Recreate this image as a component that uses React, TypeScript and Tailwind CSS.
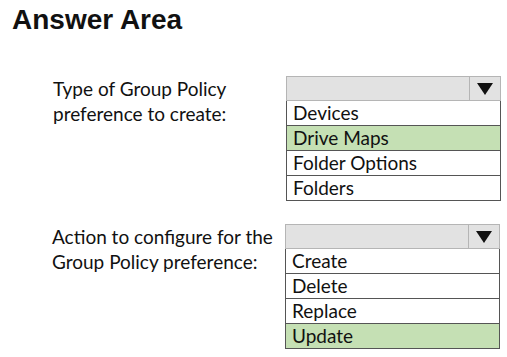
import React from 'react'

const labelFont = { fontFamily: 'Lato, "Open Sans", sans-serif' }

type Item = { text: string; selected?: boolean }

function Dropdown({ items }: { items: Item[] }) {
  return (
    <div className="w-[215px]">
      {/* closed header with arrow */}
      <div className="flex h-[25px] border border-[#b5b5b5] bg-[#e2e2e2]">
        <div className="flex-1" />
        <div className="flex w-[31px] items-center justify-center border-l border-[#b5b5b5]">
          <svg width="16" height="12" viewBox="0 0 16 12">
            <polygon points="0,0 16,0 8,12" fill="#111" />
          </svg>
        </div>
      </div>
      {items.map((item) => (
        <div
          key={item.text}
          className={
            'h-[25px] border-x border-b border-[#555] pl-[6px] text-[19px] leading-[23px] text-[#111] ' +
            (item.selected ? 'bg-[#c5e0b4]' : 'bg-white')
          }
          style={labelFont}
        >
          {item.text}
        </div>
      ))}
    </div>
  )
}

export default function App() {
  return (
    <div className="h-[357px] w-[507px] overflow-hidden bg-white">
      <h1
        className="pl-[12px] pt-[4px] text-[28px] font-bold leading-[32px] text-[#111]"
        style={{ fontFamily: '"Liberation Sans", Arial, sans-serif' }}
      >
        Answer Area
      </h1>

      <div className="mt-[40px] flex">
        <div className="w-[286px] pl-[53px] text-[19px] leading-[25px] text-[#111]" style={labelFont}>
          Type of Group Policy
          <br />
          preference to create:
        </div>
        <Dropdown
          items={[
            { text: 'Devices' },
            { text: 'Drive Maps', selected: true },
            { text: 'Folder Options' },
            { text: 'Folders' },
          ]}
        />
      </div>

      <div className="mt-[23px] flex">
        <div className="w-[285px] pl-[52px] text-[19px] leading-[25px] text-[#111]" style={labelFont}>
          Action to configure for the
          <br />
          Group Policy preference:
        </div>
        <Dropdown
          items={[
            { text: 'Create' },
            { text: 'Delete' },
            { text: 'Replace' },
            { text: 'Update', selected: true },
          ]}
        />
      </div>
    </div>
  )
}
